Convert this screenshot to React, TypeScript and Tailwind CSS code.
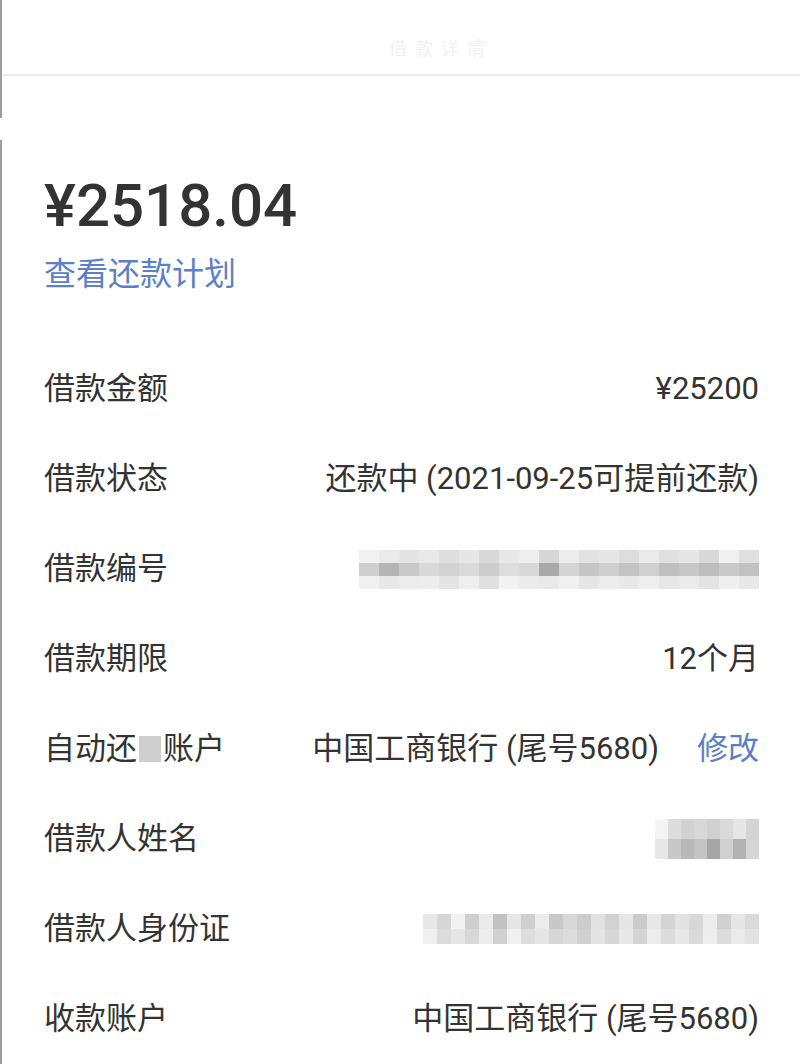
import React from "react";

const font = { fontFamily: 'Roboto, "Noto Sans CJK SC", sans-serif' };

function Mosaic({ rows, cell, h }: { rows: string[][]; cell: number; h: number }) {
  return (
    <div className="flex flex-col">
      {rows.map((r, i) => (
        <div key={i} className="flex">
          {r.map((c, j) => (
            <div key={j} style={{ width: cell, height: h, background: c }} />
          ))}
        </div>
      ))}
    </div>
  );
}

const idRows = [
  ["#f2f2f2","#ebebeb","#e4e4e4","#e9e9e9","#dedede","#e6e6e6","#d9d9d9","#e8e8e8","#eeeeee","#d6d6d6","#ececec","#e2e2e2","#e6e6e6","#dddddd","#eaeaea","#e0e0e0","#e6e6e6","#d8d8d8","#f1f1f1","#e0e0e0"],
  ["#cfcfcf","#b5b5b5","#c9c9c9","#d9d9d9","#d2d2d2","#dadada","#cccccc","#dddddd","#d8d8d8","#a9a9a9","#d4d4d4","#c6c6c6","#cfcfcf","#c4c4c4","#d0d0d0","#bfbfbf","#c7c7c7","#bdbdbd","#cacaca","#c1c1c1"],
  ["#f0f0f0","#e8e8e8","#ececec","#ededed","#e4e4e4","#eeeeee","#e0e0e0","#f2f2f2","#ebebeb","#e9e9e9","#f0f0f0","#e6e6e6","#ececec","#e8e8e8","#efefef","#e7e7e7","#ebebeb","#e3e3e3","#efefef","#e8e8e8"],
];

const nameRows = [
  ["#f4f4f4","#dcdcdc","#d2d2d2","#d8d8d8","#d0d0d0","#dadada","#e6e6e6","#d4d4d4"],
  ["#e8e8e8","#c8c8c8","#b8b8b8","#c4c4c4","#a6a6a6","#d0d0d0","#b2b2b2","#d6d6d6"],
];

const idcRows = [
  ["#e8e8e8","#d6d6d6","#f2f2f2","#cfcfcf","#eaeaea","#c2c2c2","#e6e6e6","#d0d0d0","#ececec","#c8c8c8","#d8d8d8","#cccccc","#e2e2e2","#d2d2d2","#e6e6e6","#cbcbcb","#e8e8e8","#d4d4d4","#e2e2e2","#d8d8d8","#ececec","#d0d0d0","#e6e6e6","#dadada"],
  ["#f0f0f0","#dcdcdc","#e6e6e6","#d8d8d8","#ededed","#d0d0d0","#f0f0f0","#dddddd","#e6e6e6","#d6d6d6","#dcdcdc","#d0d0d0","#e4e4e4","#d6d6d6","#e8e8e8","#d4d4d4","#ececec","#dcdcdc","#e8e8e8","#dadada","#eeeeee","#dcdcdc","#eaeaea","#e2e2e2"],
];

function Row({ label, children }: { label: React.ReactNode; children: React.ReactNode }) {
  return (
    <div className="h-[90px] flex items-center justify-between text-[31px] text-[#333333]">
      <div className="flex items-center whitespace-nowrap">{label}</div>
      <div className="flex items-center whitespace-nowrap">{children}</div>
    </div>
  );
}

export default function App() {
  return (
    <div className="w-[800px] h-[1064px] bg-white flex overflow-hidden" style={font}>
      <div className="w-[2px] flex flex-col shrink-0">
        <div className="h-[118px] bg-[#9c9c9c]" />
        <div className="h-[22px] bg-white" />
        <div className="flex-1 bg-[#9c9c9c]" />
      </div>
      <div className="flex-1 flex flex-col">
        <div className="h-[77px] border-b-2 border-[#ececec] flex items-end justify-center pb-[12px] pl-[80px]">
          <span className="text-[18px] text-[#f2f2f2] tracking-[8px]">借款详情</span>
        </div>
        <div className="pl-[42px] pr-[41px] flex flex-col">
          <div className="mt-[100px] h-[60px] leading-[60px] text-[60px] font-medium text-[#333333]">¥2518.04</div>
          <div className="mt-[18px] h-[40px] leading-[40px] text-[32px] text-[#5b80c9]">查看还款计划</div>
          <div className="mt-[50px] flex flex-col">
            <Row label="借款金额">¥25200</Row>
            <Row label="借款状态">还款中 (2021-09-25可提前还款)</Row>
            <Row label="借款编号">
              <Mosaic rows={idRows} cell={20} h={13} />
            </Row>
            <Row label="借款期限">12个月</Row>
            <Row
              label={
                <>
                  <span>自动还</span>
                  <span className="inline-block w-[22px] h-[26px] bg-[#cfcfcf] mx-[2px]" />
                  <span>账户</span>
                </>
              }
            >
              <span>中国工商银行 (尾号5680)</span>
              <span className="ml-[38px] text-[#5b80c9]">修改</span>
            </Row>
            <Row label="借款人姓名">
              <Mosaic rows={nameRows} cell={13} h={20} />
            </Row>
            <Row label="借款人身份证">
              <Mosaic rows={idcRows} cell={14} h={15} />
            </Row>
            <Row label="收款账户">中国工商银行 (尾号5680)</Row>
          </div>
        </div>
      </div>
    </div>
  );
}
